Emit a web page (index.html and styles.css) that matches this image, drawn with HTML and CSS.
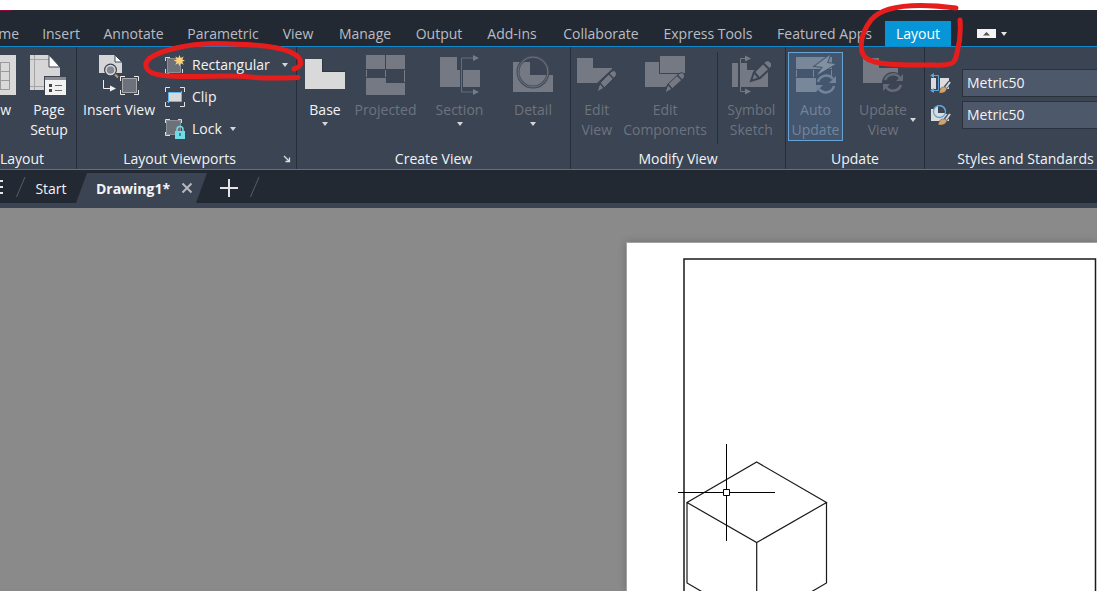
FILE: index.html
```
<!DOCTYPE html>
<html lang="en">
<head>
<meta charset="utf-8">
<title>Drawing1</title>
<link rel="stylesheet" href="styles.css">
</head>
<body>
<div class="app">
  <div class="titlebar"></div>
  <nav class="menu" aria-label="Ribbon tabs">
    <a href="#home" class="cut">Home</a>
    <a href="#insert">Insert</a>
    <a href="#annotate">Annotate</a>
    <a href="#parametric">Parametric</a>
    <a href="#view">View</a>
    <a href="#manage">Manage</a>
    <a href="#output">Output</a>
    <a href="#addins">Add-ins</a>
    <a href="#collaborate">Collaborate</a>
    <a href="#express">Express Tools</a>
    <a href="#featured">Featured Apps</a>
    <a href="#layout" class="current">Layout</a>
    <button class="collapse" aria-label="Minimize ribbon">
      <svg width="32" height="10" viewBox="0 0 32 10"><path d="M0 0h19v9H0z" fill="#f4f4f4"/><path d="M6 6.500l3.500-3.500 3.500 3.500z" fill="#555"/><path d="M24 3h6l-3 4z" fill="#e6e6e6"/></svg>
    </button>
  </nav>

  <div class="ribbon">
    <section class="panel panel-layout">
      <div class="tools">
        <button class="big new">
          <svg width="40" height="40" viewBox="-24 0 40 40"><path d="M-24 0h40v40h-40z" fill="#d9d9d9"/><path d="M-12 7.500H9.500v27H-12zM-12 16.500H9.500M-12 25.500H9.500M.5 7v27" fill="none" stroke="#9a9a9a"/></svg>
          <span>New</span>
        </button>
        <button class="big">
          <svg width="40" height="40" viewBox="0 0 40 40"><path d="M1 0h19l11 12v23H1z" fill="#d6d6d6"/><path d="M5.500 0v35M1 4.500h19M1 31.500h15" stroke="#a5a5a5" fill="none"/><path d="M20 0v12h11z" fill="#fff" stroke="#3b4453"/><path d="M15 21h23v20H15z" fill="#3b4453"/><path d="M16 22h21v18H16z" fill="#f2f2f2"/><path d="M16 22h21v3H16z" fill="#8b8b8b"/><path d="M20 29h3v3h-3zM20 34h3v3h-3z" fill="#444"/><path d="M26 30.500h7M26 35.500h7" stroke="#666"/></svg>
          <span>Page<br>Setup</span>
        </button>
      </div>
      <h2>Layout</h2>
    </section>

    <section class="panel panel-viewports">
      <div class="tools">
        <button class="big">
          <svg width="40" height="40" viewBox="0 0 40 40"><path d="M0 0h16l7 7v11H0z" fill="#d6d6d6"/><path d="M16 0v7h7z" fill="#fff" stroke="#3b4453"/><path d="M14 18l5 5" stroke="#3b4453" stroke-width="4"/><path d="M15 18.500l4 4" stroke="#c49a6c" stroke-width="2"/><circle cx="11.500" cy="15" r="6.500" fill="#3b4453"/><circle cx="11.500" cy="15" r="4.500" fill="#858991" stroke="#dcdcdc" stroke-width="1.500"/><path d="M4.500 25v8.500H12" fill="none" stroke="#f0f0f0"/><path d="M11 30.500l6 3-6 3z" fill="#f0f0f0"/><path d="M23.500 23.500h14v14h-14z" fill="#6d717a" stroke="#a5a8ad"/><path d="M21.500 26v-4.500H26M35 21.500h4.500V26M21.500 35v4.500H26M35 39.500h4.500V35" fill="none" stroke="#ececec"/></svg>
          <span>Insert View</span>
        </button>
        <div class="stack">
          <button class="small">
            <svg width="20" height="20" viewBox="0 0 20 20"><path d="M2.500 3.500h13v14h-13z" fill="#6d717a" stroke="#8b8e95"/><path d="M.5 6V2.500H5M.5 14v4.500H4M17.500 14v4" fill="none" stroke="#dedede"/><path d="M14.500 0l1.200 3 3-1.400L17.300 4.500l3 1-3 1.200 1.400 3-3-1.400-1.200 3-1.200-3-3 1.400 1.400-3-3-1.200 3-1-1.400-2.900 3 1.400z" fill="#fbd37c"/></svg>
            <span>Rectangular</span><i class="arrow"></i>
          </button>
          <button class="small">
            <svg width="20" height="20" viewBox="0 0 20 20"><path d="M.5 5V.5H5M15 .5h4.500V5M.5 15v4.500H5M15 19.500h4.500V15" fill="none" stroke="#e4e4e4"/><path d="M4 6h12v8H4z" fill="#d9d9d9"/><path d="M2 14.500h14.500V4M3.500 16V5.500H17" fill="none" stroke="#62b5f0"/></svg>
            <span>Clip</span>
          </button>
          <button class="small">
            <svg width="20" height="20" viewBox="0 0 20 20"><path d="M1.500 1.500h14v14h-14z" fill="#6d717a" stroke="#8b8e95"/><path d="M.5 4V.5H5M13 .5h3.500V4M.5 13v3.500H5" fill="none" stroke="#dedede"/><path d="M10 12h10v8H10z" fill="#71dce8"/><path d="M12 12v-1.500a3 3 0 0 1 6 0V12" fill="none" stroke="#71dce8" stroke-width="1.500"/><path d="M15 14v3" stroke="#26707a" stroke-width="1.500"/></svg>
            <span>Lock</span><i class="arrow near"></i>
          </button>
        </div>
      </div>
      <h2>Layout Viewports</h2>
      <button class="launcher" aria-label="Viewport settings"><svg width="8" height="8" viewBox="0 0 8 8"><path d="M1 1l5 5M2.500 6.500h4v-4" fill="none" stroke="#ddd" stroke-width="1.300"/></svg></button>
    </section>

    <section class="panel panel-create">
      <div class="tools">
        <button class="big">
          <svg width="40" height="40" viewBox="0 0 40 40"><path d="M0 4h17v13h23v17H0z" fill="#d9d9d9"/><path d="M17.500 4v12.500H40" fill="none" stroke="#2e3642"/></svg>
          <span>Base</span><i class="arrow"></i>
        </button>
        <button class="big off" disabled>
          <svg width="40" height="40" viewBox="0 0 40 40"><path d="M0 0h19v14H0zM20 0h19v14H20zM0 23h20v5h19v12H0z" fill="#757983"/><path d="M.5 15v7M19.500 15v7M38.500 15v12" stroke="#757983"/></svg>
          <span>Projected</span>
        </button>
        <button class="big off" disabled>
          <svg width="40" height="40" viewBox="0 0 40 40"><path d="M0 2h17v13h3v17H0zM23 15h17v17H23z" fill="#757983"/><path d="M34 3H21.500v34H34" fill="none" stroke="#656d7a"/><path d="M33 0l6 3-6 3zM33 34l6 3-6 3z" fill="#747c88"/></svg>
          <span>Section</span><i class="arrow"></i>
        </button>
        <button class="big off" disabled>
          <svg width="40" height="40" viewBox="0 0 40 40"><path d="M0 7h17v13h23v17H0z" fill="#757983"/><path d="M18 2v18h17A15 15 0 0 0 20 2z" fill="#3c4352"/><circle cx="20" cy="17" r="15" fill="none" stroke="#454c5a" stroke-width="3"/><circle cx="20" cy="17" r="15" fill="none" stroke="#6b7481"/></svg>
          <span>Detail</span><i class="arrow"></i>
        </button>
      </div>
      <h2>Create View</h2>
    </section>

    <section class="panel panel-modify">
      <div class="tools">
        <button class="big off" disabled>
          <svg width="40" height="40" viewBox="0 0 40 40"><path d="M0 3h16v10h19v1L20 28H0z" fill="#757983"/><path d="M20 37l3-9 12-12q3-1 4 1t0 4L27 33z" fill="#757983" stroke="#3c4352"/><path d="M23 28l4 5M32 19l5 5" stroke="#3c4352" stroke-width="1.500"/></svg>
          <span>Edit<br>View</span>
        </button>
        <button class="big off" disabled>
          <svg width="40" height="40" viewBox="0 0 40 40"><path d="M0 7h14v12h22L20 32H0z" fill="#757983"/><path d="M14.500 .5h26v18h-26z" fill="#757983" stroke="#3c4352"/><path d="M20 38l3-9 12-11q3-1 4 1t0 4L27 34z" fill="#757983" stroke="#3c4352"/><path d="M23 29l4 5M32 20l5 5" stroke="#3c4352" stroke-width="1.500"/></svg>
          <span>Edit<br>Components</span>
        </button>
        <span class="divider"></span>
        <button class="big off" disabled>
          <svg width="40" height="40" viewBox="0 0 40 40"><path d="M1 8h6v24H1zM10 8h6v7h21v17H10z" fill="#757983"/><path d="M17 3.500H9.500v33H17" fill="none" stroke="#757983"/><path d="M14 .5l6 3-6 3zM14 33.500l6 3-6 3z" fill="#757983"/><path d="M20 26l3-9L34 6q3-2 6 1t1 5L29 23z" fill="#757983" stroke="#3c4352" stroke-width="2"/><path d="M23 17l5 6M32 8l6 6" stroke="#3c4352" stroke-width="2"/></svg>
          <span>Symbol<br>Sketch</span>
        </button>
      </div>
      <h2>Modify View</h2>
    </section>

    <section class="panel panel-update">
      <div class="tools">
        <button class="big off pressed" disabled>
          <svg width="40" height="40" viewBox="0 0 40 40"><path d="M0 2h36v12H0zM0 23h20v14H0z" fill="#788799"/><path d="M.5 15v7M17.500 15v7M35.500 15v7" stroke="#788799"/><path d="M34 0L19 11l8 1-6 8L39.500 9 31 8z" fill="#8290a2" stroke="#43566e" stroke-width="2" paint-order="stroke"/><circle cx="30" cy="29" r="10" fill="#43566e"/><path d="M22 27a8.500 8.500 0 0 1 15-3M38 31a8.500 8.500 0 0 1-15 3" fill="none" stroke="#72849a" stroke-width="2.500"/><path d="M40 21v7h-7zM20 37v-7h7z" fill="#72849a"/></svg>
          <span>Auto<br>Update</span>
        </button>
        <button class="big off menu-side" disabled>
          <svg width="40" height="40" viewBox="0 0 40 40"><path d="M0 3h16v10h19v15H0z" fill="#757983"/><circle cx="30" cy="28" r="11" fill="#3c4352"/><path d="M22 25a8.500 8.500 0 0 1 15-2M38 30a8.500 8.500 0 0 1-15 2" fill="none" stroke="#646b78" stroke-width="2.500"/><path d="M40 19v7h-7zM20 36v-7h7z" fill="#646b78"/></svg>
          <span>Update<br>View</span><i class="arrow"></i>
        </button>
      </div>
      <h2>Update</h2>
    </section>

    <section class="panel panel-styles">
      <div class="tools">
        <label class="field">
          <svg width="22" height="20" viewBox="0 0 22 20"><path d="M1 5h5v11H1zM10 5h9v11h-9z" fill="#dcdcdc"/><path d="M3 2.500h5.500v15H3" fill="none" stroke="#5ba5dc"/><path d="M4 0v5L0 2.500zM4 15v5l-4-2.500z" fill="#5ba5dc"/><path d="M15.500 14.500L20 9" stroke="#3b4453" stroke-width="4"/><path d="M9 20q1-7 6-6l2 2q-2 5-8 4z" fill="#d2a36a" stroke="#3b4453" stroke-width=".5"/><path d="M16 14.500L20 9" stroke="#d8d8d8" stroke-width="2"/></svg>
          <select aria-label="Section view style"><option>Metric50</option></select>
        </label>
        <label class="field">
          <svg width="22" height="20" viewBox="0 0 22 20"><path d="M1 4h6v5h12v7H1z" fill="#dcdcdc"/><circle cx="9.500" cy="6.500" r="6" fill="#dcdcdc"/><path d="M8 1v7h7a6 6 0 0 0-7-7z" fill="#3b4453"/><circle cx="9.500" cy="6.500" r="6" fill="none" stroke="#5ba5dc" stroke-width="1.300"/><path d="M15.500 14.500L20 9" stroke="#3b4453" stroke-width="4"/><path d="M8 20q1-7 7-6l2 2q-2 5-9 4z" fill="#d2a36a" stroke="#3b4453" stroke-width=".5"/><path d="M16 14.500L20 9" stroke="#d8d8d8" stroke-width="2"/></svg>
          <select aria-label="Detail view style"><option>Metric50</option></select>
        </label>
      </div>
      <h2>Styles and Standards</h2>
    </section>
  </div>

  <div class="files">
    <button class="burger" aria-label="File tabs menu"><svg width="4" height="16" viewBox="0 0 4 16"><path d="M0 2h3M0 8h3M0 14h3" stroke="#e6e6e6" stroke-width="2"/></svg></button>
    <svg class="slash" width="10" height="20" viewBox="0 0 10 20"><path d="M.5 20L9 0" stroke="#555e6b"/></svg>
    <button class="file">Start</button>
    <button class="file active">Drawing1*</button>
    <button class="close" aria-label="Close Drawing1"><svg width="12" height="12" viewBox="0 0 12 12"><path d="M1.500 1.500l9 9M10.500 1.500l-9 9" stroke="#b4b8be" stroke-width="2"/></svg></button>
    <button class="add" aria-label="New drawing"><svg width="18" height="18" viewBox="0 0 18 18"><path d="M0 9h18M9 0v18" stroke="#e4e4e4" stroke-width="2"/></svg></button>
    <svg class="slash" width="10" height="20" viewBox="0 0 10 20"><path d="M.5 20L9 0" stroke="#555e6b"/></svg>
  </div>

  <main class="canvas">
    <div class="paper">
      <svg class="drawing" width="470" height="400" viewBox="627 243 470 400" fill="none" stroke="#1a1a1a" stroke-width="1.200">
        <path d="M684 600V259h411.500V600" stroke-width="1.500"/>
        <path d="M756.700 462L826.500 502.500 756.700 542.500 687 502.500zM687 502.500V583l69.700 40.500 69.800-40.500V502.500M756.700 542.500V623"/>
        <path d="M726.500 444v45M726.500 496v45M678 492.500h45M730 492.500h45" stroke="#000" stroke-width="1"/>
        <path d="M723.500 489.500h6v6h-6z" fill="#fff" stroke="#000" stroke-width="1"/>
      </svg>
    </div>
  </main>

  <svg class="markup" width="1097" height="110" viewBox="0 0 1097 110" fill="none" stroke="#e51d1d" stroke-width="5" stroke-linecap="round" stroke-linejoin="round">
    <path d="M294 69Q304 66 299 58C288 45 246 44 213 43.500C188 44 161 50 150 58C142 65 146 73 160 75C190 79 222 74 250 77C268 79 284 78 298 77.500"/>
    <path d="M956 8C924 4 885 3 871 20C859 36 859 52 866 58C876 66 905 65 932 65C954 66 955 63 957 53C960 42 961 32 960 20"/>
  </svg>
</div>
</body>
</html>
```
FILE: styles.css
```
* { box-sizing: border-box; }

body {
  margin: 0;
  font: 14px/20px "Open Sans", "Noto Sans", sans-serif;
  color: #f2f3f5;
  background: #8a8a8a;
}

button {
  margin: 0;
  padding: 0;
  border: 0;
  background: none;
  color: inherit;
  font: inherit;
}

svg { display: block; flex: none; }

.app {
  position: relative;
  display: flex;
  flex-direction: column;
  min-height: 100vh;
  overflow: hidden;
}

.titlebar { height: 10px; background: #fff; }

.menu {
  display: grid;
  grid-template-columns: 31px 60px 85px 94px 56px 78px 70px 76px 102px 112px 121px 66px 1fr;
  height: 37px;
  padding-top: 11px;
  background: linear-gradient(#8c0a3c, #8c0a3c) 0 0 / 11px 1px no-repeat #222933;
  border-bottom: 1px solid #1289cc;
}

.menu a {
  display: flex;
  align-items: center;
  justify-content: center;
  color: #b9bdc3;
  text-decoration: none;
  white-space: nowrap;
}

.menu .cut { justify-content: flex-end; padding-right: 12px; }
.menu .current { background: #0696d7; color: #fff; }
.collapse { padding-left: 26px; }

.ribbon {
  display: flex;
  height: 123px;
  background: #3b4453;
  border-bottom: 1px solid #1289cc;
}

.panel {
  position: relative;
  display: flex;
  flex: none;
  flex-direction: column;
  border-right: 1px solid #262d38;
}

.panel h2 {
  margin: 0;
  font-size: 14px;
  font-weight: 400;
  line-height: 20px;
  text-align: center;
  white-space: nowrap;
}

.panel-layout { width: 77px; }
.panel-layout h2 { padding-right: 38px; }
.panel-viewports { width: 220px; }
.panel-viewports h2 { padding-right: 14px; }
.panel-create { width: 274px; }
.panel-modify { width: 215px; }
.panel-update { width: 139px; }
.panel-styles { flex: 1; min-width: 172px; border-right: 0; }
.panel-styles h2 { padding-left: 29px; }

.tools { display: flex; flex: 1; }

.big {
  display: flex;
  flex-direction: column;
  align-items: center;
  padding-top: 8px;
  white-space: nowrap;
}

.big span { margin-top: 5px; }
.off { color: #6d737f; }

.arrow {
  width: 0;
  border: 3px solid transparent;
  border-top: 4px solid #d4d6d9;
  border-bottom: 0;
}

.big .arrow { margin-top: 2px; }

.panel-layout .new { align-items: flex-end; width: 16px; }
.new span { padding-right: 5px; }
.panel-layout .big { margin-right: 6px; }
.panel-layout .big + .big { width: 58px; margin: 0; }

.panel-viewports .big { width: 84px; }

.panel-create .big { width: 56px; }
.panel-create .big:nth-child(2) { width: 65px; }
.panel-create .big:nth-child(3) { width: 83px; }
.panel-create .big:nth-child(4) { width: 64px; }

.panel-modify .big { width: 52px; }
.panel-modify .big:nth-child(2) { width: 86px; }
.panel-modify .big:last-child { width: 68px; }
.divider { width: 1px; margin: 5px 0 5px 9px; background: #262d38; }

.panel-update .big { width: 55px; }
.panel-update .pressed {
  height: 89px;
  margin: 5px 7px 0 2px;
  padding-top: 2px;
  border: 1px solid #68a3d6;
  background: #43566e;
  color: #74849a;
}
.panel-update .menu-side { position: relative; width: 66px; }
.menu-side .arrow { position: absolute; right: 0; top: 69px; }

.stack { display: flex; flex-direction: column; padding: 2px 0 0 4px; }
.small { display: flex; align-items: center; height: 32px; }
.small span { margin-left: 7px; }
.small .arrow { margin-left: 12px; }
.small .near { margin-left: 8px; }

.launcher { position: absolute; right: 5px; bottom: 6px; }

.panel-styles .tools { flex-direction: column; gap: 4px; padding-top: 22px; }
.field { display: flex; align-items: center; padding-left: 5px; }
.field select {
  flex: 1;
  height: 28px;
  margin-left: 10px;
  padding: 0 4px;
  border: 1px solid #29313d;
  border-right: 0;
  border-radius: 0;
  appearance: none;
  background: #4d586b;
  color: #f2f3f5;
  font: inherit;
}

.files {
  display: flex;
  align-items: center;
  height: 38px;
  border-bottom: 5px solid #3b4453;
  background: #222933;
}

.burger { width: 16px; }
.file { width: 50px; height: 30px; margin-top: 3px; padding-top: 2px; white-space: nowrap; }
.files .active {
  width: 131px;
  padding-right: 17px;
  font-weight: 700;
  background: #3b4453;
  clip-path: polygon(11px 0, 100% 0, 120px 100%, 0 100%);
}
.close { position: relative; margin: 3px 0 0 -26px; }
.add { margin: 2px 12px 0 27px; }

.canvas {
  display: flex;
  flex: 1;
  padding: 34px 0 0 626px;
  background: #8a8a8a;
}

.paper {
  flex: 1;
  min-width: 0;
  height: 349px;
  overflow: hidden;
  border: 1px solid #a2a2a2;
  border-width: 1px 0 0 1px;
  background: #fff;
  box-shadow: 0 0 8px rgba(0, 0, 0, .2);
}

.markup { position: absolute; left: 0; top: 0; pointer-events: none; }
```
